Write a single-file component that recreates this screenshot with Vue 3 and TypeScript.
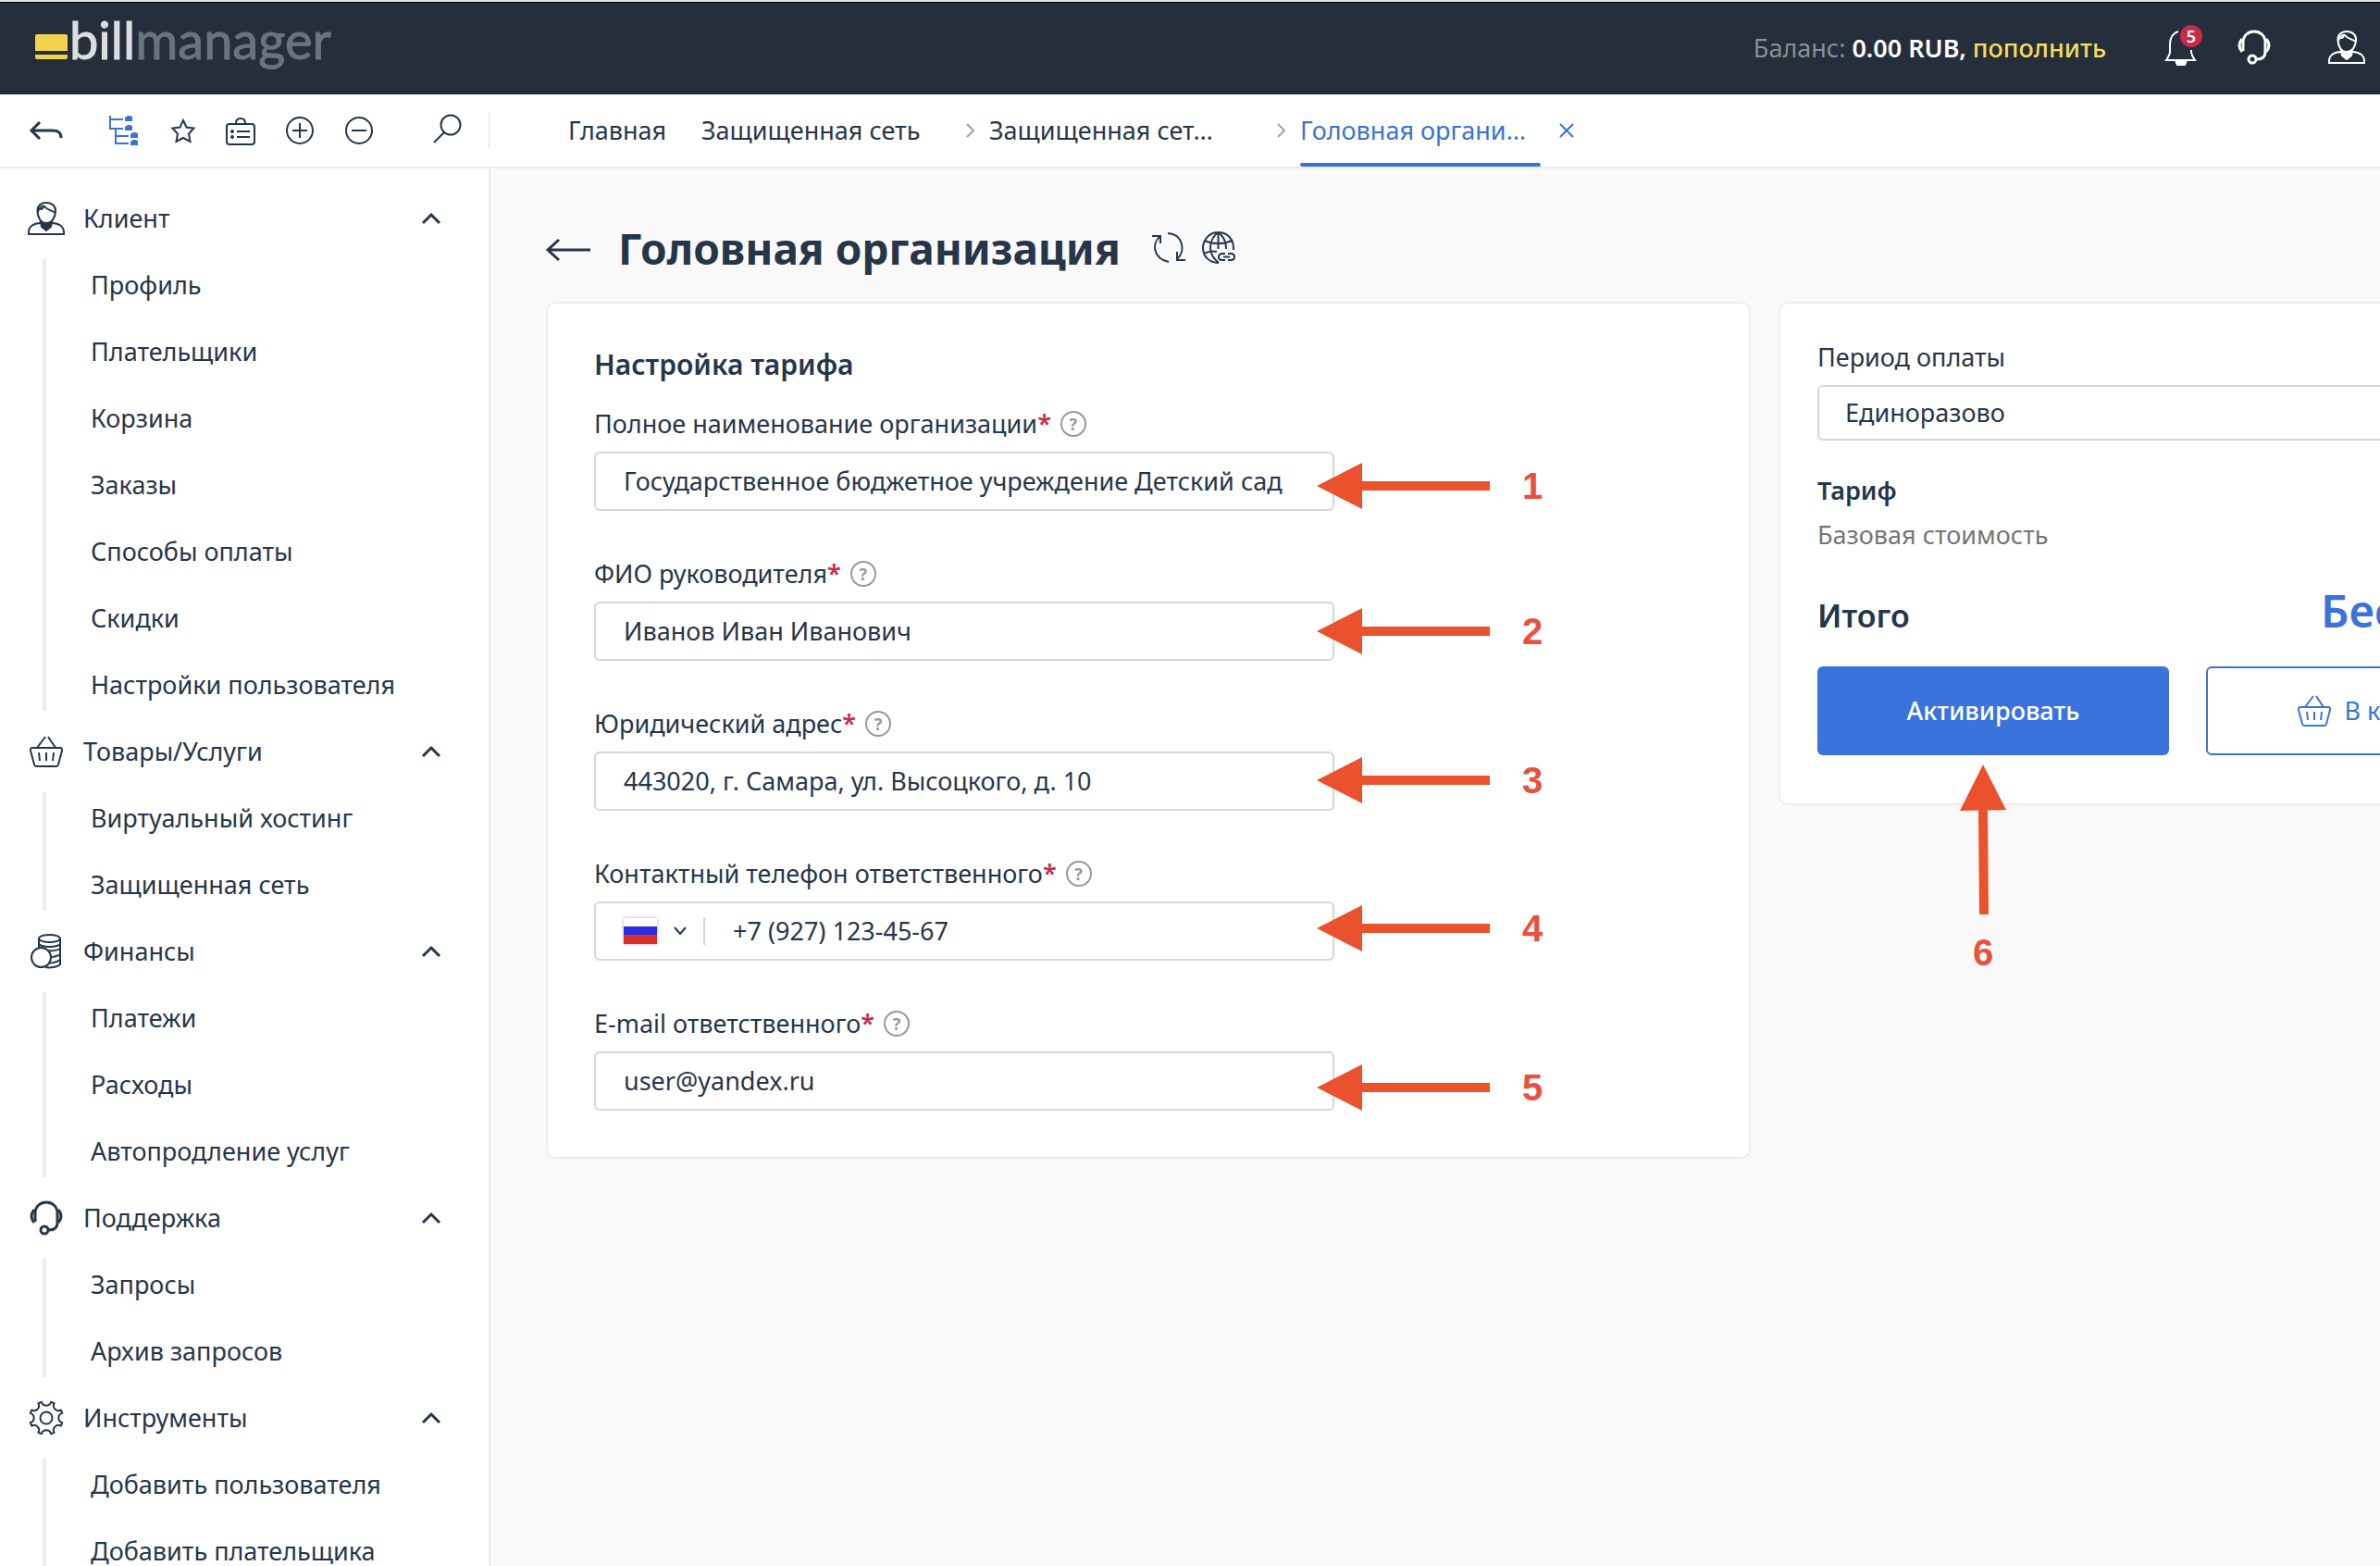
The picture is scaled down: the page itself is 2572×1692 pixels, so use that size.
<script setup lang="ts">
import { ref } from 'vue'

interface MenuGroup {
  title: string
  icon: 'user' | 'basket' | 'coins' | 'headset' | 'gear'
  items: string[]
}

interface Field {
  id: string
  label: string
  type: string
  phone?: boolean
  step: number
  noteTop: number
}

const menu: MenuGroup[] = [
  {
    title: 'Клиент',
    icon: 'user',
    items: ['Профиль', 'Плательщики', 'Корзина', 'Заказы', 'Способы оплаты', 'Скидки', 'Настройки пользователя'],
  },
  { title: 'Товары/Услуги', icon: 'basket', items: ['Виртуальный хостинг', 'Защищенная сеть'] },
  { title: 'Финансы', icon: 'coins', items: ['Платежи', 'Расходы', 'Автопродление услуг'] },
  { title: 'Поддержка', icon: 'headset', items: ['Запросы', 'Архив запросов'] },
  { title: 'Инструменты', icon: 'gear', items: ['Добавить пользователя', 'Добавить плательщика'] },
]

const fields: Field[] = [
  { id: 'org', label: 'Полное наименование организации', type: 'text', step: 1, noteTop: 60 },
  { id: 'head', label: 'ФИО руководителя', type: 'text', step: 2, noteTop: 55 },
  { id: 'address', label: 'Юридический адрес', type: 'text', step: 3, noteTop: 54 },
  { id: 'phone', label: 'Контактный телефон ответственного', type: 'tel', phone: true, step: 4, noteTop: 52 },
  { id: 'email', label: 'E-mail ответственного', type: 'email', step: 5, noteTop: 62 },
]

const values = ref<Record<string, string>>({
  org: 'Государственное бюджетное учреждение Детский сад',
  head: 'Иванов Иван Иванович',
  address: '443020, г. Самара, ул. Высоцкого, д. 10',
  phone: '+7 (927) 123-45-67',
  email: 'user@yandex.ru',
})

const period = ref('once')

/* Outline of the eight-toothed gear: rounded teeth joined by concave arcs. */
function gearOutline(): string {
  const at = (deg: number, r: number) => {
    const a = (deg * Math.PI) / 180
    return `${(18 + r * Math.cos(a)).toFixed(2)} ${(18 + r * Math.sin(a)).toFixed(2)}`
  }
  let d = ''
  for (let k = 0; k < 8; k++) {
    const c = 22.5 + k * 45
    d += `${k ? 'L' : 'M'}${at(c - 6, 18)}L${at(c + 6, 18)}`
    d += `A5.3 5.3 0 0 0 ${at(c + 39, 18)}`
  }
  return d + 'Z'
}
const gearPath = gearOutline()
</script>

<template>
  <div class="page">
    <header class="topbar">
      <a class="logo" href="#" aria-label="billmanager">
        <svg class="logo-mark" viewBox="0 0 35 27" aria-hidden="true">
          <path d="M2 0H33Q35 0 35 2V18H0V2Q0 0 2 0Z" />
          <path d="M0 22H35V25Q35 27 33 27H2Q0 27 0 25Z" />
        </svg>
        <span class="logo-bill">bill</span><span class="logo-manager">manager</span>
      </a>
      <div class="account">
        <p class="balance">Баланс: <strong>0.00 RUB,</strong> <a href="#">пополнить</a></p>
        <button class="icon-btn bell" type="button" aria-label="Уведомления">
          <svg width="40" height="48" viewBox="0 0 40 48">
            <path d="M14 6C8 8 5 13 5 20V28C5 31 3 34 1 37H32C30 34 28 31 28 28V26" />
            <path class="solid" d="M11 37H23L21 42H13Z" />
          </svg>
          <span class="badge">5</span>
        </button>
        <button class="icon-btn headset" type="button" aria-label="Поддержка">
          <svg width="36" height="40" viewBox="0 0 36 40">
            <path stroke-width="3" d="M6 23V14C6 6 12 2 18 2S30 6 30 14V24C30 29 27 32 21 32" />
            <path stroke-width="3" d="M5 10Q-1 17 5 24M31 10Q37 17 31 24" />
            <circle cx="16" cy="32" r="4" stroke-width="3" />
          </svg>
        </button>
        <button class="icon-btn" type="button" aria-label="Профиль">
          <svg width="40" height="38" viewBox="0 0 40 38">
            <path d="M10.500 9C10.500 4 15 1 20 1S30 4 30 9C30 17 26 23 20 23S10.500 17 10.500 9Z" />
            <path d="M11 11C12 7 15 4 18 5C21 9 26 9 30 12M12 7C15 9 17 8 17 4" />
            <path class="solid" d="M14 22Q20 27 26 22L25 27L20 31L15 27Z" />
            <path d="M14 23C6 23 1 27 1 33V35H39V33C39 27 34 23 26 23" />
          </svg>
        </button>
      </div>
    </header>

    <div class="toolbar">
      <div class="tools">
        <button class="icon-btn tool-back" type="button" aria-label="Свернуть">
          <svg width="36" height="20" viewBox="0 0 36 20">
            <path stroke-width="3" d="M11 1L2 10L11 19M2 10H24C31 10 34 12 34 18" />
          </svg>
        </button>
        <button class="icon-btn tool-tree" type="button" aria-label="Дерево меню">
          <svg width="32" height="32" viewBox="0 0 32 32">
            <path d="M1 0V14H15M1 4H15M7 14V30H21M7 22H21" />
            <path class="tree-node" d="M17 2L20 0H22L25 1V6H17ZM17 12L20 10H22L25 11V16H17ZM23 20L26 18H28L31 19V24H23ZM23 28L26 26H28L31 27V32H23Z" />
          </svg>
        </button>
        <button class="icon-btn" type="button" aria-label="Избранное">
          <svg width="28" height="28" viewBox="0 0 28 28">
            <path d="M14 3L17.500 10.500L25.500 11.500L20 17.500L21.500 26L14 22L6.500 26L8 17.500L2.500 11.500L10.500 10.500Z" />
          </svg>
        </button>
        <button class="icon-btn" type="button" aria-label="Задачи">
          <svg width="32" height="32" viewBox="0 0 32 32">
            <rect x="1" y="9" width="30" height="22" rx="3" />
            <path d="M11 8C11 5 13 3 16 3S21 5 21 8M12 17H26M12 23H26" />
            <circle class="solid" cx="7" cy="17" r="1" /><circle class="solid" cx="7" cy="23" r="1" />
          </svg>
        </button>
        <button class="icon-btn" type="button" aria-label="Развернуть все">
          <svg width="32" height="32" viewBox="0 0 32 32">
            <circle cx="16" cy="16" r="14" /><path d="M8 16H24M16 8V24" />
          </svg>
        </button>
        <button class="icon-btn" type="button" aria-label="Свернуть все">
          <svg width="32" height="32" viewBox="0 0 32 32">
            <circle cx="16" cy="16" r="14" /><path d="M8 16H24" />
          </svg>
        </button>
        <button class="icon-btn tool-search" type="button" aria-label="Поиск">
          <svg width="32" height="36" viewBox="0 0 32 36">
            <circle cx="19" cy="12" r="10.500" /><path d="M12 20L1 31" />
          </svg>
        </button>
      </div>
      <nav class="tabs" aria-label="Вкладки">
        <a class="tab tab-home" href="#">Главная</a>
        <a class="tab tab-list" href="#">Защищенная сеть</a>
        <svg class="sep" width="10" height="16" viewBox="0 0 10 16"><path d="M1 1L8 8L1 15" /></svg>
        <a class="tab tab-wide" href="#">Защищенная сет…</a>
        <svg class="sep sep-far" width="10" height="16" viewBox="0 0 10 16"><path d="M1 1L8 8L1 15" /></svg>
        <a class="tab tab-wide active" href="#" aria-current="page">Головная органи…</a>
        <button class="icon-btn tab-close" type="button" aria-label="Закрыть">
          <svg width="16" height="16" viewBox="0 0 16 16"><path d="M1 1L15 15M15 1L1 15" /></svg>
        </button>
      </nav>
    </div>

    <div class="body">
      <aside class="sidebar">
        <section v-for="group in menu" :key="group.title" class="group">
          <button class="group-head" type="button" aria-expanded="true">
            <span class="group-icon">
              <svg v-if="group.icon === 'user'" width="40" height="36" viewBox="0 0 40 36">
                <path d="M10.500 9C10.500 4 15 1 20 1S30 4 30 9C30 17 26 23 20 23S10.500 17 10.500 9Z" />
                <path d="M11 11C12 7 15 4 18 5C21 9 26 9 30 12M12 7C15 9 17 8 17 4" />
                <path class="solid" d="M14 22Q20 27 26 22L25 27L20 31L15 27Z" />
                <path d="M14 23C6 23 1 27 1 33V35H39V33C39 27 34 23 26 23" />
              </svg>
              <svg v-else-if="group.icon === 'basket'" width="36" height="34" viewBox="0 0 36 34">
                <path d="M17 1L8 13M20 1L28 13M3 13H33Q35.500 13 35 16L31 31Q30.500 33 29 33H7Q5.500 33 5 31L1 16Q0.500 13 3 13ZM10 18L11 27M18 18V27M26 18L25 27" />
              </svg>
              <svg v-else-if="group.icon === 'coins'" width="34" height="38" viewBox="0 0 34 38">
                <ellipse cx="20.500" cy="5" rx="11.500" ry="4" />
                <path d="M9 5V15M32 5V33C29 36 21 37 16 36M9 11C13 15 28 15 32 11M17 18Q27 19 32 16M21 25Q28 25 32 22M19 32Q28 31 32 28" />
                <circle class="coin" cx="11.500" cy="25.500" r="10.500" />
              </svg>
              <svg v-else-if="group.icon === 'headset'" width="36" height="38" viewBox="0 0 36 38">
                <path stroke-width="3" d="M6 23V14C6 6 12 2 18 2S30 6 30 14V24C30 29 27 32 21 32" />
                <path stroke-width="3" d="M5 10Q-1 17 5 24M31 10Q37 17 31 24" />
                <circle cx="16" cy="32" r="4" stroke-width="3" />
              </svg>
              <svg v-else width="36" height="36" viewBox="0 0 36 36" stroke-linejoin="round">
                <path :d="gearPath" /><circle cx="18" cy="18" r="6.500" />
              </svg>
            </span>
            <span class="group-title">{{ group.title }}</span>
            <svg class="chevron" width="20" height="12" viewBox="0 0 20 12"><path d="M1 11L10 2L19 11" /></svg>
          </button>
          <ul class="group-items">
            <li v-for="item in group.items" :key="item"><a href="#">{{ item }}</a></li>
          </ul>
        </section>
      </aside>

      <main class="content">
        <div class="title-row">
          <button class="icon-btn title-back" type="button" aria-label="Назад">
            <svg width="48" height="24" viewBox="0 0 48 24">
              <path stroke-width="3" d="M14 1L2 12L14 23M2 12H48" />
            </svg>
          </button>
          <h1>Головная организация</h1>
          <div class="title-tools">
            <button class="icon-btn" type="button" aria-label="Обновить">
              <svg width="36" height="34" viewBox="0 0 36 34">
                <path d="M0 5H9V13M9 5C0 12 0 29 18 33M17 2C33 3 37 21 27 30M27 22V31H36" />
              </svg>
            </button>
            <button class="icon-btn" type="button" aria-label="Ссылка">
              <svg width="36" height="36" viewBox="0 0 36 36">
                <path d="M18 34C8 34 1 27 1 18S8 1 17.500 1S34 8 34 18V20M18 34C12 29 9 24 9 18S12 5 17.500 1C23 5 26 11 26 19M3 10C11 14 24 14 32 10M2 24C6 22 12 21 16 22M17.500 1V19" />
                <path d="M25 24H22Q18 24 18 27.500T22 31H25M28 24H31Q35 24 35 27.500T31 31H28M23 27.500H30" />
              </svg>
            </button>
          </div>
        </div>

        <div class="panels">
          <form class="card settings" @submit.prevent>
            <h2>Настройка тарифа</h2>
            <div v-for="field in fields" :key="field.id" class="field">
              <div class="label-row">
                <label :for="field.id">{{ field.label }}<span class="required">*</span></label>
                <button class="help" type="button" aria-label="Подсказка">?</button>
              </div>
              <div class="control">
                <button v-if="field.phone" class="country" type="button" aria-label="Страна: Россия">
                  <span class="flag"></span>
                  <svg width="14" height="10" viewBox="0 0 14 10"><path d="M1 1L7 8L13 1" /></svg>
                </button>
                <input :id="field.id" v-model="values[field.id]" :type="field.type" />
              </div>
              <div class="note" :style="{ top: field.noteTop + 'px' }">
                <svg width="188" height="50" viewBox="0 0 188 50">
                  <path d="M0 25L49 0V20H187V30H49V50Z" />
                </svg>
                <span>{{ field.step }}</span>
              </div>
            </div>
          </form>

          <section class="card order">
            <label class="order-label" for="period">Период оплаты</label>
            <select id="period" v-model="period">
              <option value="once">Единоразово</option>
            </select>
            <h3>Тариф</h3>
            <p class="base-cost">Базовая стоимость</p>
            <div class="total">
              <span class="total-label">Итого</span>
              <span class="total-value">Бесплатно</span>
            </div>
            <div class="actions">
              <div class="action">
                <button class="btn primary" type="button">Активировать</button>
                <div class="note-up">
                  <svg width="50" height="162" viewBox="0 0 50 162">
                    <path d="M25 0L50 49L30 49.500L31 162H21L20 49.500L0 50Z" />
                  </svg>
                  <span>6</span>
                </div>
              </div>
              <div class="action">
                <button class="btn outline" type="button">
                  <svg width="36" height="34" viewBox="0 0 36 34">
                    <path d="M17 1L8 13M20 1L28 13M3 13H33Q35.500 13 35 16L31 31Q30.500 33 29 33H7Q5.500 33 5 31L1 16Q0.500 13 3 13ZM10 18L11 27M18 18V27M26 18L25 27" />
                  </svg>
                  В корзину
                </button>
              </div>
            </div>
          </section>
        </div>
      </main>
    </div>
  </div>
</template>

<style>
body {
  background: #f9f9f9;
}
</style>

<style scoped>
.page {
  display: flex;
  flex-direction: column;
  height: 100vh;
  overflow: hidden;
  color: #26364a;
  background: #f9f9f9;
  font-family: "Noto Sans", "Open Sans", sans-serif;
  font-size: 27px;
  line-height: 36px;
}
.page *,
.page *::before {
  box-sizing: border-box;
}
a {
  color: inherit;
  text-decoration: none;
}
button,
input,
select {
  margin: 0;
  padding: 0;
  border: 0;
  background: none;
  color: inherit;
  font: inherit;
}
svg {
  display: block;
  flex: none;
  fill: none;
  stroke: currentColor;
  stroke-width: 2;
  overflow: visible;
}
svg .solid {
  fill: currentColor;
}
.icon-btn {
  display: flex;
  flex: none;
}

.topbar {
  display: flex;
  flex: none;
  align-items: center;
  justify-content: space-between;
  height: 102px;
  padding: 0 16px 0 38px;
  border-top: 2px solid #e3e5e8;
  background: #242f3b;
  box-shadow: inset 0 1px #000;
}
.logo {
  display: flex;
  align-items: baseline;
  margin-bottom: 18px;
  font-family: Lato, sans-serif;
  font-size: 56px;
  line-height: 64px;
}
.logo-mark {
  width: 35px;
  height: 27px;
  margin-right: 2px;
  stroke: none;
  fill: #f1d34b;
}
.logo-bill {
  color: #dcdde0;
  -webkit-text-stroke: 1px #dcdde0;
}
.logo-manager {
  color: #6b737c;
  -webkit-text-stroke: 1px #6b737c;
}
.account {
  display: flex;
  align-items: center;
  color: #fff;
}
.balance {
  margin: 0 64px 0 0;
  color: #8b8f94;
}
.balance strong {
  color: #fff;
  font-weight: 600;
}
.balance a {
  color: #f5dc5f;
  font-weight: 500;
}
.bell {
  position: relative;
  margin-right: 38px;
}
.badge {
  position: absolute;
  top: -1px;
  left: 16px;
  width: 24px;
  height: 24px;
  border-radius: 50%;
  background: #c9294a;
  font-size: 18px;
  font-weight: 600;
  line-height: 24px;
  text-align: center;
}
.headset {
  margin-right: 62px;
}

.toolbar {
  display: flex;
  flex: none;
  height: 80px;
  border-bottom: 2px solid #ebebeb;
  background: #fff;
}
.tools {
  display: flex;
  flex: none;
  align-items: center;
  gap: 32px;
  width: 530px;
  height: 38px;
  margin-top: 20px;
  padding-left: 32px;
  border-right: 2px solid #ebebeb;
}
.tool-back {
  margin-right: 18px;
}
.tool-tree {
  margin-right: 2px;
  color: #3a72d2;
}
.tree-node {
  fill: currentColor;
  stroke: none;
}
.tool-search {
  margin-left: 32px;
}
.tabs {
  display: flex;
  align-items: stretch;
  padding-left: 84px;
  line-height: 78px;
  white-space: nowrap;
}
.tab-home {
  min-width: 144px;
}
.tab-list {
  min-width: 286px;
}
.tab-wide {
  width: 260px;
}
.active {
  position: relative;
  color: #3a72d2;
}
.active::after {
  content: "";
  position: absolute;
  right: 0;
  bottom: 0;
  left: 0;
  height: 4px;
  border-radius: 2px;
  background: #3a72d2;
}
.sep {
  align-self: center;
  margin-right: 15px;
  color: #a0a4a8;
}
.sep-far {
  margin-left: 51px;
}
.tab-close {
  align-self: center;
  margin-left: 20px;
  color: #3a72d2;
}

.body {
  display: flex;
  flex: 1;
  min-height: 0;
}
.sidebar {
  flex: none;
  width: 530px;
  padding: 18px 52px 0 30px;
  border-right: 2px solid #ebebeb;
  background: #fff;
}
.group-head {
  display: flex;
  align-items: center;
  width: 100%;
  height: 72px;
  text-align: left;
}
.group-icon {
  display: flex;
  justify-content: center;
  width: 40px;
  margin-right: 20px;
}
.coin {
  fill: #fff;
}
.group-title {
  flex: 1;
}
.chevron {
  stroke-width: 3;
}
.group-items {
  position: relative;
  margin: 0;
  padding: 0;
  list-style: none;
}
.group-items::before {
  content: "";
  position: absolute;
  top: 8px;
  bottom: 8px;
  left: 16px;
  width: 4px;
  background: #ededed;
}
.group-items a {
  display: block;
  padding: 18px 0 18px 68px;
  white-space: nowrap;
}

.content {
  flex: 1;
  min-width: 0;
  padding: 48px 0 0 60px;
  overflow: hidden;
}
.title-row {
  display: flex;
  align-items: center;
  height: 80px;
  margin-bottom: 16px;
}
.title-back {
  margin-right: 30px;
}
h1 {
  margin: 0;
  padding-bottom: 4px;
  font-size: 46px;
  font-weight: 700;
  line-height: 64px;
}
.title-tools {
  display: flex;
  gap: 18px;
  margin: 0 0 4px 34px;
}
.panels {
  display: flex;
  align-items: flex-start;
  gap: 30px;
  margin-right: -234px;
}
.card {
  border: 2px solid #ededed;
  border-radius: 10px;
  background: #fff;
}
.settings {
  flex: 1;
  min-width: 0;
  padding: 46px 50px 50px;
}
h2 {
  margin: 0 0 26px;
  font-size: 30px;
  font-weight: 600;
  line-height: 40px;
}
.field {
  position: relative;
}
.field + .field {
  margin-top: 50px;
}
.label-row {
  display: flex;
  align-items: center;
  gap: 10px;
  height: 36px;
  margin-bottom: 12px;
}
.required {
  color: #cb2a4c;
  font-weight: 600;
}
.help {
  width: 28px;
  height: 28px;
  border: 2px solid #999;
  border-radius: 50%;
  color: #999;
  font-size: 18px;
  font-weight: 700;
  line-height: 24px;
  text-align: center;
}
.control {
  display: flex;
  align-items: center;
  width: 800px;
  height: 64px;
  border: 2px solid #d6d6d6;
  border-radius: 6px;
  background: #fff;
}
.control input {
  flex: 1;
  min-width: 0;
  height: 60px;
  padding: 0 30px 2px;
}
.country {
  display: flex;
  flex: none;
  align-items: center;
  gap: 18px;
  height: 30px;
  margin-left: 30px;
  padding-right: 18px;
  border-right: 2px solid #d6d6d6;
}
.flag {
  width: 36px;
  height: 28px;
  background: linear-gradient(#fff 0 33%, #2b2be6 33% 64%, #d9302c 64%);
  box-shadow: 0 0 3px rgba(0, 0, 0, 0.35);
}
.note,
.note-up {
  position: absolute;
  display: flex;
  align-items: center;
  color: #e8503f;
  font-family: "Liberation Sans", Arial, sans-serif;
  font-size: 40px;
  font-weight: 700;
  line-height: 50px;
}
.note {
  left: 781px;
  gap: 34px;
}
.note svg,
.note-up svg {
  stroke: none;
  fill: #ea512d;
}

.order {
  flex: none;
  width: 884px;
  padding: 40px 40px 52px;
}
.order-label {
  display: block;
  margin-bottom: 12px;
}
select {
  display: block;
  width: 100%;
  height: 60px;
  padding: 0 28px;
  border: 2px solid #d6d6d6;
  border-radius: 6px;
  background: #fff;
  appearance: none;
}
h3 {
  margin: 36px 0 12px;
  font-size: 27px;
  font-weight: 600;
  line-height: 36px;
}
.base-cost {
  margin: 0;
  color: #757575;
}
.total {
  display: flex;
  align-items: baseline;
  justify-content: space-between;
  height: 64px;
  margin: 32px 0 28px;
  font-weight: 600;
  line-height: 64px;
}
.total-label {
  font-size: 34px;
}
.total-value {
  width: 256px;
  color: #3a73dc;
  font-size: 48px;
}
.actions {
  display: flex;
  gap: 40px;
}
.action {
  position: relative;
  flex: 1;
}
.btn {
  display: flex;
  align-items: center;
  justify-content: center;
  gap: 14px;
  width: 100%;
  height: 96px;
  border-radius: 6px;
}
.primary {
  background: #3a73dc;
  color: #fff;
  font-weight: 500;
}
.outline {
  border: 2px solid #3a73d0;
  color: #3a73dc;
}
.note-up {
  top: 106px;
  left: 154px;
  flex-direction: column;
  gap: 16px;
}
</style>
